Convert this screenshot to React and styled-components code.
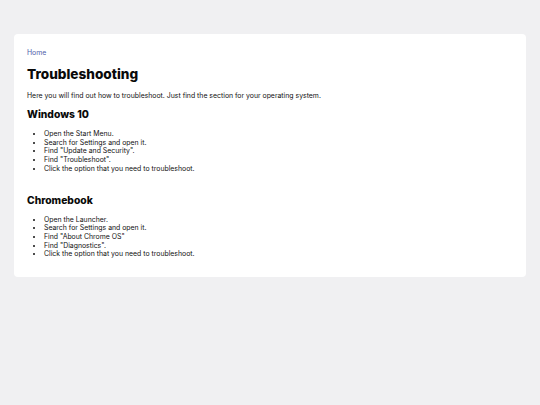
import React from "react";
import styled, { createGlobalStyle } from "styled-components";

const Global = createGlobalStyle`
  html, body { margin: 0; padding: 0; background: #f0f0f2; }
  body { font-family: Inter, "Noto Sans", sans-serif; color: #111; }
`;

const Page = styled.div`
  padding: 34px 14px;
`;

const Card = styled.main`
  background: #fff;
  border-radius: 4px;
  padding: 14px 13px 18px;
`;

const Crumb = styled.a`
  display: block;
  font-size: 6.9px;
  line-height: 9px;
  color: #4f5eaa;
  text-decoration: none;
`;

const Title = styled.h1`
  font-size: 13.6px;
  font-weight: 800;
  margin: 8px 0 0;
  line-height: 18px;
  color: #0a0a0a;
`;

const Intro = styled.p`
  font-size: 6.9px;
  line-height: 9px;
  margin: 8px 0 0;
`;

const Heading = styled.h2`
  font-size: 10.3px;
  font-weight: 800;
  margin: ${(p) => p.$top}px 0 0;
  line-height: 14px;
  color: #0a0a0a;
`;

const List = styled.ul`
  margin: 9px 0 0;
  padding-left: 17px;
  font-size: 6.9px;
  line-height: 8.7px;
`;

const sections = [
  {
    name: "Windows 10",
    top: 7,
    steps: [
      "Open the Start Menu.",
      "Search for Settings and open it.",
      'Find "Update and Security".',
      'Find "Troubleshoot".',
      "Click the option that you need to troubleshoot.",
    ],
  },
  {
    name: "Chromebook",
    top: 19,
    steps: [
      "Open the Launcher.",
      "Search for Settings and open it.",
      'Find "About Chrome OS"',
      'Find "Diagnostics".',
      "Click the option that you need to troubleshoot.",
    ],
  },
];

export default function App() {
  return (
    <>
      <Global />
      <Page>
        <Card>
          <Crumb href="#">Home</Crumb>
          <Title>Troubleshooting</Title>
          <Intro>
            Here you will find out how to troubleshoot. Just find the section for your operating system.
          </Intro>
          {sections.map((s) => (
            <section key={s.name}>
              <Heading $top={s.top}>{s.name}</Heading>
              <List>
                {s.steps.map((t) => (
                  <li key={t}>{t}</li>
                ))}
              </List>
            </section>
          ))}
        </Card>
      </Page>
    </>
  );
}
